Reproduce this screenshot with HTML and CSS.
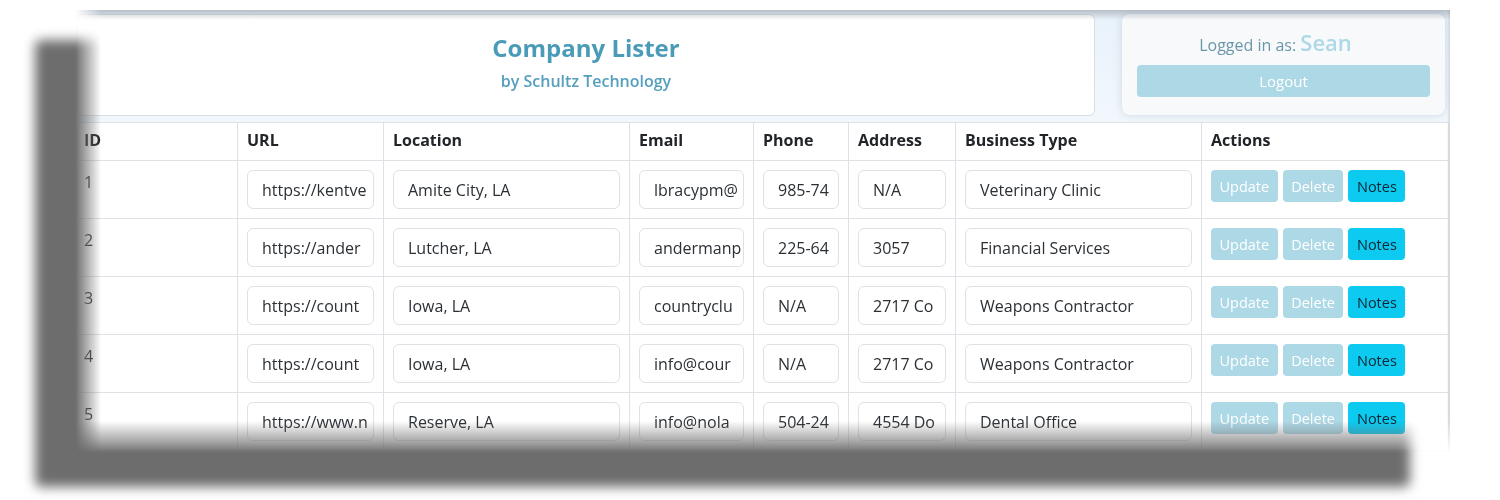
FILE: index.html
```html
<!DOCTYPE html>
<html lang="en">
<head>
<meta charset="utf-8">
<title>Company Lister</title>
<link rel="stylesheet" href="styles.css">
</head>
<body>
<div class="shot">
  <div class="shot-shadow"></div>
  <div class="page">
    <div class="top">
      <div class="brand">
        <div class="brand-title">Company Lister</div>
        <div class="brand-sub">by Schultz Technology</div>
      </div>
      <div class="user">
        <div class="user-line">Logged in as: <span class="user-name">Sean</span></div>
        <button class="btn-logout">Logout</button>
      </div>
    </div>
    <table class="grid">
      <colgroup>
        <col style="width:160px"><col style="width:146px"><col style="width:246px"><col style="width:124px">
        <col style="width:95px"><col style="width:107px"><col style="width:246px"><col style="width:247px">
      </colgroup>
      <thead>
        <tr><th class="c-id">ID</th><th>URL</th><th>Location</th><th>Email</th><th>Phone</th><th>Address</th><th>Business Type</th><th>Actions</th></tr>
      </thead>
      <tbody>
        <tr>
          <td class="c-id">1</td>
          <td><input class="field" value="https://kentve"></td>
          <td><input class="field" value="Amite City, LA"></td>
          <td><input class="field" value="lbracypm@"></td>
          <td><input class="field" value="985-74"></td>
          <td><input class="field" value="N/A"></td>
          <td><input class="field" value="Veterinary Clinic"></td>
          <td><div class="acts"><button class="btn btn-soft">Update</button><button class="btn btn-soft">Delete</button><button class="btn btn-info">Notes</button></div></td>
        </tr>
        <tr>
          <td class="c-id">2</td>
          <td><input class="field" value="https://ander"></td>
          <td><input class="field" value="Lutcher, LA"></td>
          <td><input class="field" value="andermanp"></td>
          <td><input class="field" value="225-64"></td>
          <td><input class="field" value="3057"></td>
          <td><input class="field" value="Financial Services"></td>
          <td><div class="acts"><button class="btn btn-soft">Update</button><button class="btn btn-soft">Delete</button><button class="btn btn-info">Notes</button></div></td>
        </tr>
        <tr>
          <td class="c-id">3</td>
          <td><input class="field" value="https://count"></td>
          <td><input class="field" value="Iowa, LA"></td>
          <td><input class="field" value="countryclu"></td>
          <td><input class="field" value="N/A"></td>
          <td><input class="field" value="2717 Co"></td>
          <td><input class="field" value="Weapons Contractor"></td>
          <td><div class="acts"><button class="btn btn-soft">Update</button><button class="btn btn-soft">Delete</button><button class="btn btn-info">Notes</button></div></td>
        </tr>
        <tr>
          <td class="c-id">4</td>
          <td><input class="field" value="https://count"></td>
          <td><input class="field" value="Iowa, LA"></td>
          <td><input class="field" value="info@cour"></td>
          <td><input class="field" value="N/A"></td>
          <td><input class="field" value="2717 Co"></td>
          <td><input class="field" value="Weapons Contractor"></td>
          <td><div class="acts"><button class="btn btn-soft">Update</button><button class="btn btn-soft">Delete</button><button class="btn btn-info">Notes</button></div></td>
        </tr>
        <tr>
          <td class="c-id">5</td>
          <td><input class="field" value="https://www.n"></td>
          <td><input class="field" value="Reserve, LA"></td>
          <td><input class="field" value="info@nola"></td>
          <td><input class="field" value="504-24"></td>
          <td><input class="field" value="4554 Do"></td>
          <td><input class="field" value="Dental Office"></td>
          <td><div class="acts"><button class="btn btn-soft">Update</button><button class="btn btn-soft">Delete</button><button class="btn btn-info">Notes</button></div></td>
        </tr>
      </tbody>
    </table>
  </div>
</div>
</body>
</html>
```

FILE: styles.css
```css
html, body {
  margin: 0;
  padding: 0;
  background: #ffffff;
}

body {
  font-family: "Open Sans", "Noto Sans", sans-serif;
  color: #212529;
  width: 1500px;
  height: 500px;
  overflow: hidden;
}

.shot {
  position: relative;
  margin: 10px 0 0 75px;
  width: 1375px;
  height: 443px;
}

.shot-shadow {
  position: absolute;
  left: -40px;
  top: 30px;
  width: 1375px;
  height: 447px;
  background: #6d6d6d;
  filter: blur(6px);
  border-radius: 6px;
}

.page {
  position: relative;
  box-sizing: border-box;
  width: 1375px;
  height: 443px;
  overflow: hidden;
  padding: 4px 5px 0 2px;
  display: flex;
  flex-direction: column;
  gap: 6px;
  background: linear-gradient(to bottom, #e9f2fa, #f2f8fd 120px, #ffffff 120px);
  -webkit-mask-image: linear-gradient(to right, transparent 0, #000 26px), linear-gradient(to top, transparent 0, rgba(0,0,0,0.35) 10px, #000 32px);
  -webkit-mask-composite: source-in;
  mask-image: linear-gradient(to right, transparent 0, #000 26px), linear-gradient(to top, transparent 0, rgba(0,0,0,0.35) 10px, #000 32px);
  mask-composite: intersect;
}

.page::after {
  content: "";
  position: absolute;
  left: 0;
  right: 0;
  top: 0;
  height: 10px;
  background: linear-gradient(to bottom, rgba(120,130,140,0.45), rgba(120,130,140,0));
  pointer-events: none;
}

.page::before {
  content: "";
  position: absolute;
  top: 0;
  bottom: 0;
  right: 0;
  width: 3px;
  background: linear-gradient(to right, rgba(200,205,210,0), rgba(200,205,210,0.8));
  pointer-events: none;
}

.top {
  display: flex;
  gap: 27px;
  height: 102px;
  flex: none;
}

.brand {
  box-sizing: border-box;
  width: 1018px;
  height: 102px;
  background: #ffffff;
  border: 1px solid #d9dee3;
  border-radius: 6px;
  padding-top: 17px;
  display: flex;
  flex-direction: column;
  align-items: center;
  gap: 6px;
}

.brand-title {
  font-size: 24px;
  line-height: 32px;
  font-weight: 700;
  color: #4a9bb7;
}

.brand-sub {
  font-size: 16px;
  line-height: 22px;
  font-weight: 600;
  color: #559fbd;
}

.user {
  box-sizing: border-box;
  width: 323px;
  height: 101px;
  background: #f7f9fb;
  border-radius: 8px;
  box-shadow: 0 0 9px rgba(90, 110, 130, 0.22);
  padding: 13px 15px 0 15px;
  display: flex;
  flex-direction: column;
  align-items: stretch;
  gap: 4px;
}

.user-line {
  text-align: center;
  font-size: 16px;
  line-height: 31px;
  color: #6b96a9;
  padding-right: 16px;
}

.user-name {
  font-size: 22px;
  font-weight: 600;
  color: #add8e6;
}

.btn-logout {
  height: 32px;
  border: none;
  border-radius: 4px;
  background: #add8e6;
  color: #ffffff;
  font-family: inherit;
  font-size: 15px;
  padding: 0;
}

.grid {
  table-layout: fixed;
  width: 1371px;
  border-collapse: collapse;
  background: #ffffff;
  flex: none;
}

.grid th,
.grid td {
  border: 1px solid #dee2e6;
  text-align: left;
  vertical-align: top;
  padding: 9px;
  font-size: 16px;
  line-height: 24px;
}

.grid th {
  font-weight: 700;
  padding-top: 5px;
  padding-bottom: 8px;
  color: #212529;
}

.grid td {
  height: 39px;
  color: #2f353a;
}

.grid .c-id {
  padding-left: 6px;
}

.field {
  display: block;
  box-sizing: border-box;
  width: 100%;
  height: 39px;
  margin: 0;
  border: 1px solid #dee2e6;
  border-radius: 6px;
  padding: 0 1px 0 14px;
  background: #ffffff;
  font-family: "Open Sans", "Noto Sans", sans-serif;
  font-size: 16px;
  color: #2b3035;
  outline: none;
}

.acts {
  display: flex;
  gap: 5px;
}

.btn {
  height: 32px;
  border: none;
  border-radius: 4px;
  padding: 0 8.5px;
  font-family: "Open Sans", "Noto Sans", sans-serif;
  font-size: 14.5px;
}

.btn-soft {
  background: #add8e6;
  color: #ffffff;
}

.btn-info {
  background: #0dcaf0;
  color: #0b2633;
}
```
